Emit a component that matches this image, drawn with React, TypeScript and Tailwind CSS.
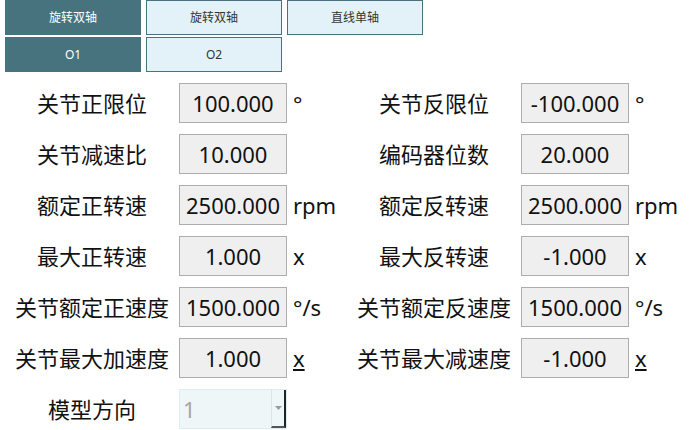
const font = "font-['Noto_Sans','Noto_Sans_CJK_SC',sans-serif]";

type Field = { label: string; value: string; unit?: string; underline?: boolean };

const rows: [Field, Field | null][] = [
  [
    { label: "关节正限位", value: "100.000", unit: "°" },
    { label: "关节反限位", value: "-100.000", unit: "°" },
  ],
  [
    { label: "关节减速比", value: "10.000" },
    { label: "编码器位数", value: "20.000" },
  ],
  [
    { label: "额定正转速", value: "2500.000", unit: "rpm" },
    { label: "额定反转速", value: "2500.000", unit: "rpm" },
  ],
  [
    { label: "最大正转速", value: "1.000", unit: "x" },
    { label: "最大反转速", value: "-1.000", unit: "x" },
  ],
  [
    { label: "关节额定正速度", value: "1500.000", unit: "°/s" },
    { label: "关节额定反速度", value: "1500.000", unit: "°/s" },
  ],
  [
    { label: "关节最大加速度", value: "1.000", unit: "x", underline: true },
    { label: "关节最大减速度", value: "-1.000", unit: "x", underline: true },
  ],
];

function Tab({ text, active }: { text: string; active?: boolean }) {
  return (
    <div
      className={
        active
          ? "flex h-[35px] w-[136px] items-center justify-center border border-[#47737f] bg-[#47737f] text-[12px] text-white"
          : "flex h-[35px] w-[136px] items-center justify-center border border-[#47737f] bg-[#e3f2f8] text-[12px] text-[#333]"
      }
    >
      {text}
    </div>
  );
}

function FieldCell({ field }: { field: Field }) {
  return (
    <div className="flex w-[342px] items-center">
      <div className="w-[174px] text-center text-[22px] text-[#111]">{field.label}</div>
      <div className="flex h-[40px] w-[108px] items-center justify-center border border-[#adadad] bg-[#efefef] text-[22px] text-[#111]">
        {field.value}
      </div>
      {field.unit && (
        <div className={field.underline ? "ml-[6px] text-[22px] text-[#111] underline" : "ml-[6px] text-[22px] text-[#111]"}>
          {field.unit}
        </div>
      )}
    </div>
  );
}

export default function App() {
  return (
    <div className={`${font} h-[430px] w-[690px] overflow-hidden bg-white pl-[5px]`}>
      <div className="flex flex-col gap-[2px]">
        <div className="flex gap-[5px]">
          <Tab text="旋转双轴" active />
          <Tab text="旋转双轴" />
          <Tab text="直线单轴" />
        </div>
        <div className="flex gap-[5px]">
          <Tab text="O1" active />
          <Tab text="O2" />
        </div>
      </div>

      <div className="mt-[11px] flex flex-col gap-[11px]">
        {rows.map(([a, b], i) => (
          <div key={i} className="flex">
            <FieldCell field={a} />
            {b && <FieldCell field={b} />}
          </div>
        ))}
        <div className="flex items-center">
          <div className="w-[174px] text-center text-[22px] text-[#111]">模型方向</div>
          <div className="flex h-[40px] w-[108px] items-stretch border border-[#dbeef5] bg-[#eef6f8]">
            <div className="flex flex-1 items-center pl-[3px] text-[22px] text-[#a5a5a5]">1</div>
            <div className="flex w-[15px] items-center justify-center border-l border-l-[#d6e6ec] border-r-2 border-r-[#222] border-b-2 border-b-[#555]">
              <svg width="7" height="4" viewBox="0 0 7 4">
                <path d="M0 0 L7 0 L3.5 4 Z" fill="#9a9a9a" />
              </svg>
            </div>
          </div>
        </div>
      </div>
    </div>
  );
}
